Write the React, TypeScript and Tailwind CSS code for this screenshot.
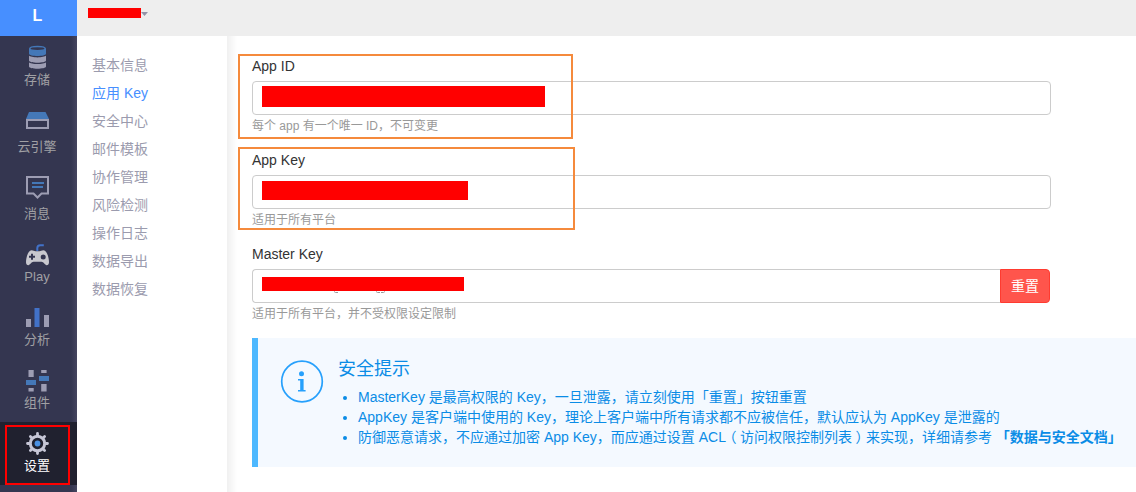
import type { ReactNode } from "react";

const GRAY = "#9d9db3";
const BLUE = "#4478b8";

function StorageIcon() {
  return (
    <svg width="24" height="30" viewBox="0 0 24 30">
      <path d="M4 8.5v5.2c0 3 17 3 17 0V8.5z" fill={BLUE} />
      <ellipse cx="12.5" cy="8.6" rx="7.7" ry="2.2" fill="#343650" stroke={BLUE} strokeWidth="1.5" />
      <path d="M4 15.6c1.5 2.4 15.500 2.400 17 0v4.900c0 2.900-17 2.900-17 0z" fill={GRAY} />
      <path d="M4 22.300c1.500 2.400 15.500 2.400 17 0v4.300c0 2.900-17 2.900-17 0z" fill={GRAY} />
    </svg>
  );
}

function EngineIcon() {
  return (
    <svg width="24" height="30" viewBox="0 0 24 30">
      <path d="M4 5h16.500l3.500 7H1z" fill={BLUE} />
      <rect x="2" y="13" width="21" height="8" fill="none" stroke={GRAY} strokeWidth="2" />
    </svg>
  );
}

function MessageIcon() {
  return (
    <svg width="24" height="30" viewBox="0 0 24 30">
      <path d="M2 3h21v16.500h-6.500l-4 4-4-4H2z" fill="none" stroke={GRAY} strokeWidth="2" />
      <path d="M7 9h12M7 13h11" stroke={BLUE} strokeWidth="2" />
    </svg>
  );
}

function PlayIcon() {
  return (
    <svg width="24" height="30" viewBox="0 0 24 30">
      <path d="M12.300 14v-3q0-2.800 3-2.800h3.500" fill="none" stroke="#4272c8" strokeWidth="2" />
      <path
        d="M6.500 13.200c2 0 2.600 1 4 1h4c1.400 0 2-1 4-1 3.500 0 5.500 8 5.500 12 0 2-1 3-2.400 3-1.600 0-3-3.400-5.100-3.400h-8c-2.100 0-3.500 3.400-5.100 3.400C2 28.200 1 27.200 1 25.200c0-4 2-12 5.500-12z"
        fill="#c8c8ce"
      />
      <path d="M4 19.800h6M7 16.800v6" stroke="#343650" strokeWidth="2" />
      <circle cx="18.200" cy="20" r="2.500" fill="#343650" />
    </svg>
  );
}

function AnalyticsIcon() {
  return (
    <svg width="24" height="30" viewBox="0 0 24 30">
      <path d="M1 19h5v8H1zM19 15h5v12h-5z" fill={GRAY} />
      <path d="M9.500 8h5v19h-5z" fill="#4272c8" />
    </svg>
  );
}

function ComponentsIcon() {
  return (
    <svg width="24" height="30" viewBox="0 0 24 30">
      <path d="M3.500 7h5.200v7H3.500zM3.500 25h5.200v3.500H3.500zM16.200 7h5.400v3h-5.400zM16.200 21h5.400v7.500h-5.400z" fill={GRAY} />
      <path d="M1 17h10v5H1zM14 13h10v5H14z" fill={BLUE} />
    </svg>
  );
}

function SettingsIcon() {
  return (
    <svg width="24" height="30" viewBox="0 0 24 30">
      <g stroke="#c6c6d6" strokeWidth="2.800" strokeLinecap="round">
        <path d="M12.500 7.500v20M2.500 17.500h20M5.400 10.400l14.200 14.200M19.600 10.400L5.400 24.600" />
      </g>
      <circle cx="12.500" cy="17.500" r="7.200" fill="#20212f" stroke="#c6c6d6" strokeWidth="3" />
      <circle cx="12.500" cy="17.500" r="2.900" fill="#4a90e2" />
    </svg>
  );
}

type NavItem = { label: string; icon: ReactNode; height: string; active?: boolean };

const NAV: NavItem[] = [
  { label: "存储", icon: <StorageIcon />, height: "h-[67px]" },
  { label: "云引擎", icon: <EngineIcon />, height: "h-[67px]" },
  { label: "消息", icon: <MessageIcon />, height: "h-[63px]" },
  { label: "Play", icon: <PlayIcon />, height: "h-[63px]" },
  { label: "分析", icon: <AnalyticsIcon />, height: "h-[63px]" },
  { label: "组件", icon: <ComponentsIcon />, height: "h-[63px]" },
  { label: "设置", icon: <SettingsIcon />, height: "h-[63px]", active: true },
];

const MENU = ["基本信息", "应用 Key", "安全中心", "邮件模板", "协作管理", "风险检测", "操作日志", "数据导出", "数据恢复"];

function Sidebar() {
  return (
    <aside className="flex w-[77px] shrink-0 flex-col bg-[#343650] bg-[linear-gradient(to_right,transparent_71px,#45455f)]">
      <div className="flex h-9 shrink-0 items-center justify-center bg-[#478fff] pb-1 pr-0.5 text-base font-bold text-white">
        L
      </div>
      {NAV.map((item) => (
        <div
          key={item.label}
          className={`relative flex shrink-0 flex-col items-center pr-[3px] pt-1 text-[13px] leading-5 ${item.height} ${
            item.active ? "bg-[#20212f] text-white" : "text-[#a0a0a4]"
          }`}
        >
          {item.icon}
          <span>{item.label}</span>
          {item.active && <div className="absolute left-[5px] top-[3px] h-[60px] w-[65px] border-2 border-[#ff0000]" />}
        </div>
      ))}
    </aside>
  );
}

function Field({ label, help, bar, frame, action }: { label: string; help: string; bar: string; frame?: string; action?: string }) {
  return (
    <div className="relative h-[94px] w-[799px]">
      <div className="h-[25px] text-sm leading-5 text-[#333]">{label}</div>
      <div className={`flex h-[34px] ${action ? "w-[798px]" : "w-[799px]"}`}>
        <div className={`flex-1 border border-[#ccc] pl-[9px] ${action ? "rounded-l border-r-0" : "rounded"}`}>
          <div className={`bg-[#ff0000] ${bar}`} />
          {action && (
            <svg width="60" height="3" viewBox="0 0 60 3" className="ml-[70px] block" fill="none" stroke="#999" strokeWidth="1">
              <path d="M2 .5q1 1.500 4 1M44 .5q1 1.500 4 1M49 1.500q3 .5 4-1" />
            </svg>
          )}
        </div>
        {action && (
          <button className="w-[50px] rounded-r border border-[#ff3b30] bg-[#ff554c] text-sm text-white">{action}</button>
        )}
      </div>
      <p className="pt-0.5 text-xs leading-[18px] text-[#999]">{help}</p>
      {frame && <div className={`absolute -left-[14px] border-2 border-[#f58a3c] ${frame}`} />}
    </div>
  );
}

function Paren({ children }: { children: ReactNode }) {
  return <span className="px-[3.5px] [font-feature-settings:'halt']">{children}</span>;
}

function Notice() {
  return (
    <section className="flex h-[129px] w-[900px] border-l-[6px] border-[#4db8ff] bg-[#f4f9ff] pl-[22px] text-[#0a8ce6]">
      <svg width="44" height="44" viewBox="0 0 44 44" className="mt-[22px] shrink-0">
        <circle cx="22" cy="21.500" r="20.300" fill="none" stroke="#26a0fc" strokeWidth="1.700" />
        <circle cx="21.500" cy="13.800" r="2.500" fill="#26a0fc" />
        <path d="M18 19h5.600v11h2v1.600H18V30h2.200v-9.400H18z" fill="#26a0fc" />
      </svg>
      <div className="ml-3.5 pt-[19px]">
        <h2 className="text-lg leading-6">安全提示</h2>
        <ul className="mt-1.5 list-disc whitespace-nowrap pl-5 text-sm leading-5">
          <li>MasterKey 是最高权限的 Key，一旦泄露，请立刻使用「重置」按钮重置</li>
          <li>AppKey 是客户端中使用的 Key，理论上客户端中所有请求都不应被信任，默认应认为 AppKey 是泄露的</li>
          <li>
            防御恶意请求，不应通过加密 App Key，而应通过设置 ACL
            <Paren>（</Paren>访问权限控制列表<Paren>）</Paren>
            来实现，详细请参考 <b>「数据与安全文档」</b>
          </li>
        </ul>
      </div>
    </section>
  );
}

export default function App() {
  return (
    <div className="flex h-[492px] w-[1136px] overflow-hidden bg-white font-['Liberation_Sans','Noto_Sans_CJK_SC',sans-serif]">
      <Sidebar />
      <div className="flex min-w-0 flex-1 flex-col">
        <header className="flex h-9 shrink-0 items-start bg-[#eee] pl-[11px] pt-2">
          <div className="h-[10px] w-[53px] bg-[#ff0000]" />
          <svg width="8" height="4" viewBox="0 0 8 4" className="mt-1">
            <path d="M0 0h7L3.500 4z" fill="#9393a8" />
          </svg>
        </header>
        <div className="flex min-h-0 flex-1">
          <nav className="w-[150px] shrink-0 pl-[15px] pt-[15px] text-sm leading-7 text-[#9b9bae]">
            {MENU.map((m) => (
              <div key={m} className={m === "应用 Key" ? "text-[#478fff]" : ""}>
                {m}
              </div>
            ))}
          </nav>
          <main className="min-w-0 flex-1 overflow-hidden bg-[linear-gradient(to_right,#f0f0f0,#fff_10px)] pl-[25px] pt-5">
            <Field label="App ID" help="每个 app 有一个唯一 ID，不可变更" bar="mt-1 h-[21px] w-[283px]" frame="-top-[2px] h-[85px] w-[335px]" />
            <Field label="App Key" help="适用于所有平台" bar="mt-[5px] h-[19px] w-[206px]" frame="-top-[3px] h-[83px] w-[337px]" />
            <Field label="Master Key" help="适用于所有平台，并不受权限设定限制" bar="mt-[7px] h-[14px] w-[202px]" action="重置" />
            <Notice />
          </main>
        </div>
      </div>
    </div>
  );
}
